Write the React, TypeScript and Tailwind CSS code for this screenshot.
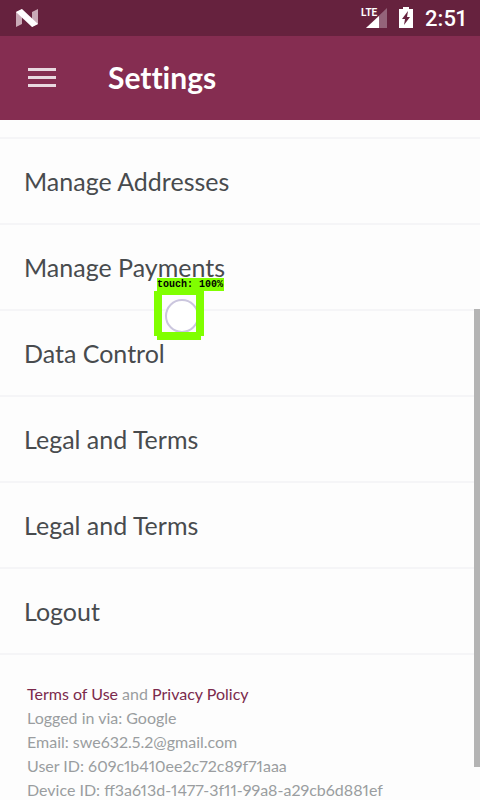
const items = [
  "Manage Addresses",
  "Manage Payments",
  "Data Control",
  "Legal and Terms",
  "Legal and Terms",
  "Logout",
];

const details = [
  "Logged in via: Google",
  "Email: swe632.5.2@gmail.com",
  "User ID: 609c1b410ee2c72c89f71aaa",
  "Device ID: ff3a613d-1477-3f11-99a8-a29cb6d881ef",
];

function StatusBar() {
  return (
    <div className="flex h-9 shrink-0 items-center justify-between bg-[#66223e] pr-3.5 pl-4 text-white">
      <svg width="22" height="18" viewBox="0 0 22 18" aria-hidden="true">
        <path d="M0 3 L6 0 V15 L0 18 Z" fill="#c9aab7" />
        <path d="M16 3 L22 0 V15 L16 18 Z" fill="#c9aab7" />
        <path d="M0 3 L6 0 L22 15 L16 18 Z" fill="#ffffff" />
      </svg>
      <div className="flex items-center">
        <div className="relative h-[22px] w-[27px]">
          <svg width="27" height="22" viewBox="0 0 27 22" aria-hidden="true">
            <path d="M27 1 V21 H6 Z" fill="#94647a" />
            <path d="M19 9 V21 H6 Z" fill="#ffffff" />
            <path d="M0 0 H16 V11 H0 Z" fill="#66223e" />
          </svg>
          <span className="absolute top-0 left-px font-['Liberation_Sans_Narrow',Roboto,sans-serif] text-[10px] leading-[11px] font-bold">
            LTE
          </span>
        </div>
        <svg className="ml-3" width="14" height="22" viewBox="0 0 14 22" aria-hidden="true">
          <path d="M4 0 H10 V2 H14 V21 H0 V2 H4 Z" fill="#ffffff" />
          <path d="M9 4 L3 12 H6 L5 18 L11 10 H8 Z" fill="#66223e" />
        </svg>
        <span className="ml-3 pt-0.5 font-[Roboto,sans-serif] text-[22px] leading-8 font-medium">2:51</span>
      </div>
    </div>
  );
}

function TouchMarker() {
  return (
    <div className="pointer-events-none absolute top-[278px] left-[154px]" aria-hidden="true">
      <div className="ml-[3px] h-[13px] w-[67px] bg-[#80ff00] font-['Liberation_Mono',monospace] text-[10px] leading-[13px] font-bold whitespace-nowrap text-black">
        touch: 100%
      </div>
      <svg width="50" height="50" viewBox="0 0 50 50">
        <circle cx="28" cy="25" r="16" fill="#ffffff" stroke="#cbc6de" strokeWidth="2" />
        <path d="M0 0 H50 V45 H47 V49 H3 V45 H0 Z M8 4 V41 H42 V4 Z" fill="#80ff00" fillRule="evenodd" />
      </svg>
    </div>
  );
}

export default function App() {
  return (
    <div className="relative flex h-screen flex-col overflow-hidden bg-[#fdfdfd] font-[Lato,sans-serif] proportional-nums">
      <StatusBar />
      <header className="flex h-[84px] shrink-0 items-center gap-[52px] bg-[#852d51] px-7 pb-0.5 text-white">
        <button type="button" aria-label="Open menu" className="flex w-7 flex-col gap-[5px]">
          <span className="h-[3px] w-full bg-[#e9d8e0]" />
          <span className="h-[3px] w-full bg-[#e9d8e0]" />
          <span className="h-[3px] w-full bg-[#e9d8e0]" />
        </button>
        <h1 className="text-[30px] font-bold [font-variant-ligatures:none]">Settings</h1>
      </header>
      <main className="min-h-0 flex-1 overflow-hidden">
        <ul className="mt-[17px] border-t-2 border-[#f5f5f7]">
          {items.map((item, i) => (
            <li key={i} className="border-b-2 border-[#f5f5f7]">
              <button type="button" className="h-[84px] w-full px-6 text-left text-[25px] leading-6 text-[#484b4e]">
                {item}
              </button>
            </li>
          ))}
        </ul>
        <footer className="px-[27px] pt-[27px] text-[16px] leading-6 text-[#9a9da0]">
          <p>
            <a href="#terms" className="text-[#7b2a4c]">Terms of Use</a> and{" "}
            <a href="#privacy" className="text-[#7b2a4c]">Privacy Policy</a>
          </p>
          {details.map((line) => (
            <p key={line}>{line}</p>
          ))}
        </footer>
      </main>
      <div className="absolute top-[309px] right-0 h-[458px] w-1.5 bg-[#b4b4b4]" aria-hidden="true" />
      <TouchMarker />
    </div>
  );
}
